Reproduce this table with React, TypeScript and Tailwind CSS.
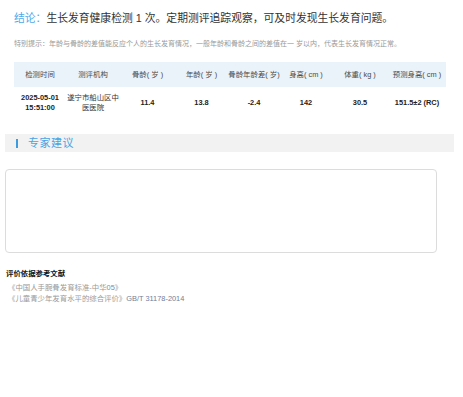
import React from "react";

const gridCols = "grid grid-cols-[52px_54px_55px_53px_52px_52px_56px_58px]";

export default function App() {
  const heads = ["检测时间", "测评机构", "骨龄( 岁 )", "年龄( 岁 )", "骨龄年龄差( 岁)", "身高( cm )", "体重( kg )", "预测身高( cm )"];
  return (
    <div
      className="w-[463px] h-[397px] bg-white text-[#333]"
      style={{ fontFamily: '"Liberation Sans", "Noto Sans CJK SC", sans-serif' }}
    >
      <div className="pl-[14px] pt-[11px] text-[10.8px] leading-[14px] text-[#333]">
        <span className="text-[#4eaaea]">结论：</span>生长发育健康检测 1 次。定期测评追踪观察，可及时发现生长发育问题。
      </div>
      <div className="pl-[14px] mt-[14px] text-[7px] leading-[10px] text-[#999]">
        特别提示：年龄与骨龄的差值能反应个人的生长发育情况，一般年龄和骨龄之间的差值在一 岁以内，代表生长发育情况正常。
      </div>
      <div className="ml-[14px] mt-[13px] w-[432px]">
        <div className={`${gridCols} h-[25px] bg-[#eaf2fa] items-center text-[7.4px] text-[#4a4a4a] text-center`}>
          {heads.map((h) => (
            <div key={h}>{h}</div>
          ))}
        </div>
        <div className={`${gridCols} h-[31px] items-center text-[7.4px] text-center font-bold text-[#222] leading-[10px]`}>
          <div>
            2025-05-01
            <br />
            15:51:00
          </div>
          <div className="font-normal text-[#333]">
            遂宁市船山区中
            <br />
            医医院
          </div>
          <div>11.4</div>
          <div>13.8</div>
          <div>-2.4</div>
          <div>142</div>
          <div>30.5</div>
          <div>151.5±2 (RC)</div>
        </div>
      </div>
      <div className="ml-[5px] mt-[16px] w-[449px] h-[18px] bg-[#f2f2f2] flex items-center">
        <div className="ml-[11px] w-[2px] h-[9px] bg-[#3d9be0]" />
        <div className="ml-[10px] text-[11px] leading-[14px] text-[#4aa3e4] tracking-[0.5px]">专家建议</div>
      </div>
      <div className="ml-[5px] mt-[17px] w-[432px] h-[84px] border border-[#dcdcdc] rounded-[4px]" />
      <div className="ml-[6px] mt-[16px] text-[7.4px] leading-[10px] font-bold text-[#111]">评价依据参考文献</div>
      <div className="ml-[8px] mt-[3px] text-[7.4px] leading-[11px] text-[#999]">
        <div>
          《中国人手腕骨发育标准-中华<span className="text-[#7d8aa3]">05</span>》
        </div>
        <div>
          《儿童青少年发育水平的综合评价》<span className="text-[#6f7e99]">GB/T 31178-2014</span>
        </div>
      </div>
    </div>
  );
}
